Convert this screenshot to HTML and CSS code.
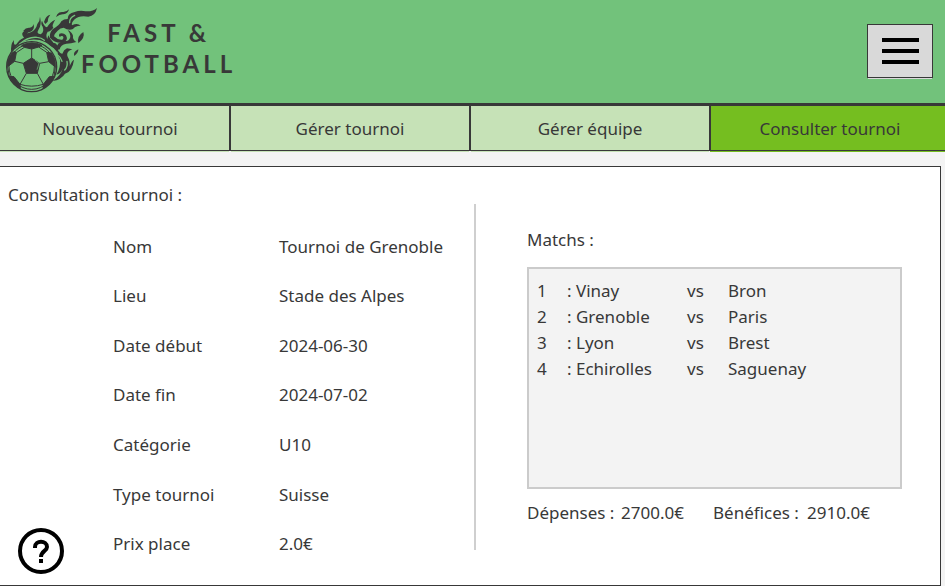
FILE: index.html
```html
<!DOCTYPE html>
<html lang="fr">
<head>
<meta charset="utf-8">
<meta name="viewport" content="width=device-width, initial-scale=1">
<title>Fast &amp; Football</title>
<link rel="stylesheet" href="styles.css">
</head>
<body>
<header class="header">
  <a class="brand" href="#">
    <svg class="brand-logo" viewBox="0 0 300 282" aria-hidden="true">
      <g fill="#383838">
        <path d="M34 158 Q30 134 42 120 Q40 138 49 133 Q56 120 72 113 Q60 100 74 93 Q76 104 92 97 Q108 90 112 72 Q120 62 120 50 Q126 75 115 90 Q108 101 122 103 Q134 96 128 80 Q121 71 126 62 Q132 80 141 82 Q150 66 166 59 Q154 76 160 83 Q151 95 143 95 Q135 107 144 121 Q154 130 166 130 Q178 140 173 158 Q153 130 119 120 Q76 113 49 139 Q40 147 34 158Z"/>
        <path d="M70 92 Q77 82 89 83 Q99 81 101 72 Q105 90 90 96 Q78 99 78 106Z"/>
        <path d="M132 66 Q137 47 151 44 Q143 53 143 65 L136 72Z"/>
        <path d="M172 43 Q178 34 190 36 Q200 36 207 28 Q204 42 190 43 Q180 42 168 51Z"/>
        <path d="M158 88 Q178 77 184 64 Q191 57 203 57 Q202 40 224 36 Q240 30 257 34 Q280 35 291 24 Q286 48 265 50 Q238 45 224 58 Q213 69 216 76 Q232 67 242 77 Q224 78 219 87 Q206 93 191 83 Q181 83 173 92 Q163 101 162 109 Q174 121 187 119 Q193 114 189 109 Q183 106 180 111 Q175 108 178 101 Q190 97 198 106 Q207 123 187 128 Q164 130 150 113 Q147 100 158 88Z"/>
        <path d="M203 90 Q216 96 219 107 Q217 119 229 126 Q213 131 199 131 Q181 135 179 148 Q170 141 174 131 Q185 121 201 123 Q211 119 211 108 Q210 98 203 90Z"/>
        <path d="M235 130 Q230 108 250 96 Q256 113 235 130Z"/>
        <path d="M217 148 Q198 155 202 168 Q211 184 209 198 Q216 182 222 179 Q217 216 195 221 Q184 239 158 243 Q184 225 188 205 Q183 222 169 224 Q183 203 180 178 Q171 167 174 151 Q181 162 187 161 Q191 149 201 145Z"/>
        <path d="M223 168 Q218 156 235 148 Q236 157 223 168Z"/>
        <path d="M145 106 Q157 133 180 139 L178 149 Q157 147 139 126Z"/>
      </g>
      <g fill="none" stroke="#72c27b" stroke-width="4" stroke-linecap="round">
        <path d="M59 132 Q84 109 112 112 Q124 113 133 121"/>
        <path d="M194 210 Q204 200 201 184 M224 46 Q208 53 209 68 M173 165 Q183 172 186 184"/>
      </g>
      <circle cx="95" cy="200" r="77" fill="#383838"/>
      <circle cx="95" cy="200" r="73" fill="#72c27b"/>
      <circle cx="95" cy="200" r="68" fill="#72c27b" stroke="#383838" stroke-width="3"/>
      <g fill="#383838" stroke="#383838" stroke-width="3" stroke-linejoin="round">
        <path d="M95 174 L119 190 L112 220 L79 220 L70 190Z"/>
        <path d="M65 136 Q95 121 126 136 L116 141 L95 147 L73 142Z"/>
        <path d="M36 159 Q45 151 49 158 L44 184 L23 200 Q20 179 36 159Z"/>
        <path d="M154 159 Q169 178 166 201 L146 185 L140 157Z"/>
        <path d="M26 229 L42 230 L60 253 L61 266 Q38 254 26 229Z"/>
        <path d="M164 229 L148 230 L130 253 L129 266 Q152 254 164 229Z"/>
      </g>
      <path d="M95 147 V174 M70 190 L44 184 M119 190 L146 185 M79 220 L60 253 M112 220 L130 253 M73 142 L49 158 M116 141 L140 157 M23 200 L28 229 M166 201 L162 229 M60 253 Q95 264 130 253" fill="none" stroke="#383838" stroke-width="3"/>
      <path d="M105 180 L117 190 L111 209" fill="none" stroke="#72c27b" stroke-width="2"/>
    </svg>
    <span class="brand-name"><span>FAST &amp;</span><span>FOOTBALL</span></span>
  </a>
  <button class="menu-button" type="button" aria-label="Menu">
    <svg class="menu-icon" viewBox="0 0 37 28" aria-hidden="true"><path d="M0 3H37M0 14H37M0 25H37" stroke="#000" stroke-width="4"/></svg>
  </button>
</header>
<nav class="tabs">
  <button class="tab" type="button">Nouveau tournoi</button>
  <button class="tab" type="button">Gérer tournoi</button>
  <button class="tab" type="button">Gérer équipe</button>
  <button class="tab tab-active" type="button">Consulter tournoi</button>
</nav>
<main class="panel">
  <section class="details">
    <h1 class="title">Consultation tournoi :</h1>
    <dl class="fields">
      <dt>Nom</dt><dd>Tournoi de Grenoble</dd>
      <dt>Lieu</dt><dd>Stade des Alpes</dd>
      <dt>Date début</dt><dd>2024-06-30</dd>
      <dt>Date fin</dt><dd>2024-07-02</dd>
      <dt>Catégorie</dt><dd>U10</dd>
      <dt>Type tournoi</dt><dd>Suisse</dd>
      <dt>Prix place</dt><dd>2.0€</dd>
    </dl>
  </section>
  <section class="matches">
    <h2 class="title">Matchs :</h2>
    <div class="match-box">
      <table class="match-table">
        <tbody>
          <tr><td class="rank">1</td><td class="home">: Vinay</td><td class="versus">vs</td><td>Bron</td></tr>
          <tr><td>2</td><td>: Grenoble</td><td>vs</td><td>Paris</td></tr>
          <tr><td>3</td><td>: Lyon</td><td>vs</td><td>Brest</td></tr>
          <tr><td>4</td><td>: Echirolles</td><td>vs</td><td>Saguenay</td></tr>
        </tbody>
      </table>
    </div>
    <div class="totals">
      <span class="total-label">Dépenses :</span><span class="total-value">2700.0€</span>
      <span class="total-label">Bénéfices :</span><span>2910.0€</span>
    </div>
  </section>
  <button class="help-button" type="button" aria-label="Aide">
    <svg class="help-icon" viewBox="0 0 46 46" fill="none" stroke="#000" aria-hidden="true">
      <circle cx="23" cy="22" r="21" stroke-width="4"/>
      <path d="M17 19V18C17 11 29 11 29 18C29 22 23 22 23 28" stroke-width="4"/>
      <path d="M23 30V34" stroke-width="4"/>
    </svg>
  </button>
</main>
</body>
</html>
```
FILE: styles.css
```css
* { box-sizing: border-box; }
body {
  display: flex;
  flex-direction: column;
  min-height: 100vh;
  margin: 0;
  overflow-x: hidden;
  background: #f3f3f3;
  color: #383838;
  font: 17px/26px "Noto Sans", "Open Sans", sans-serif;
}
button {
  margin: 0;
  padding: 0;
  font: inherit;
  color: inherit;
}
.header {
  display: flex;
  align-items: center;
  justify-content: space-between;
  height: 105px;
  padding: 0 12px 2px 0;
  border-bottom: 2px solid #383838;
  background: #72c27b;
}
.brand {
  display: flex;
  align-self: flex-start;
  color: inherit;
  text-decoration: none;
}
.brand-logo {
  width: 100px;
  height: 94px;
}
.brand-name {
  display: flex;
  flex-direction: column;
  align-items: center;
  margin-left: -19px;
  padding-top: 17px;
  font: bold 24px/31px Lato, sans-serif;
  letter-spacing: 4px;
}
.menu-button {
  display: flex;
  align-items: center;
  justify-content: center;
  width: 66px;
  height: 54px;
  border: 1px solid #383838;
  background: #d9d9d9;
  box-shadow: 0 2px 0 -1px #d9d9d9;
}
.menu-icon {
  width: 37px;
  height: 28px;
}
.tabs {
  display: grid;
  grid-template-columns: repeat(4, 1fr);
  margin: 0 -5px 0 -10px;
}
.tab {
  height: 46px;
  padding-top: 1px;
  border: 1px solid #383838;
  background: #c6e2b7;
  box-shadow: 0 2px 0 -1px #c6e2b7;
}
.tab-active {
  background: #75be20;
  box-shadow: 0 1px 0 #75be20;
}
.panel {
  position: relative;
  flex: 1;
  display: flex;
  margin: 15px 4px 0 0;
  border: solid #383838;
  border-width: 1px 1px 1px 0;
  background: #fff;
}
.title {
  margin: 0;
  font: inherit;
}
.details {
  display: flex;
  flex-direction: column;
  flex: 1;
  padding: 15px 0 16px 8px;
}
.fields {
  flex: 1;
  display: grid;
  grid-template-columns: 166px 1fr;
  grid-auto-rows: 1fr;
  align-items: center;
  margin: 14px 0 0 105px;
}
.fields dd { margin: 0; }
.matches {
  display: flex;
  flex-direction: column;
  width: 466px;
  margin: 37px 0 35px;
  padding: 23px 38px 0 51px;
  border-left: 2px solid #cfcfcf;
}
.match-box {
  height: 222px;
  margin-top: 14px;
  padding: 9px 8px;
  border: 2px solid #cbcbcb;
  background: #f3f3f3;
}
.match-table {
  border-collapse: collapse;
}
.match-table td { padding: 0; }
.rank { width: 30px; }
.home { width: 120px; }
.versus { width: 41px; }
.totals {
  display: flex;
  margin-top: 11px;
}
.total-label { width: 94px; }
.total-value { width: 92px; }
.help-button {
  position: absolute;
  left: 18px;
  bottom: 10px;
  width: 46px;
  height: 46px;
  border: 0;
  background: none;
}
.help-icon {
  display: block;
  width: 46px;
  height: 46px;
  overflow: visible;
}
```
